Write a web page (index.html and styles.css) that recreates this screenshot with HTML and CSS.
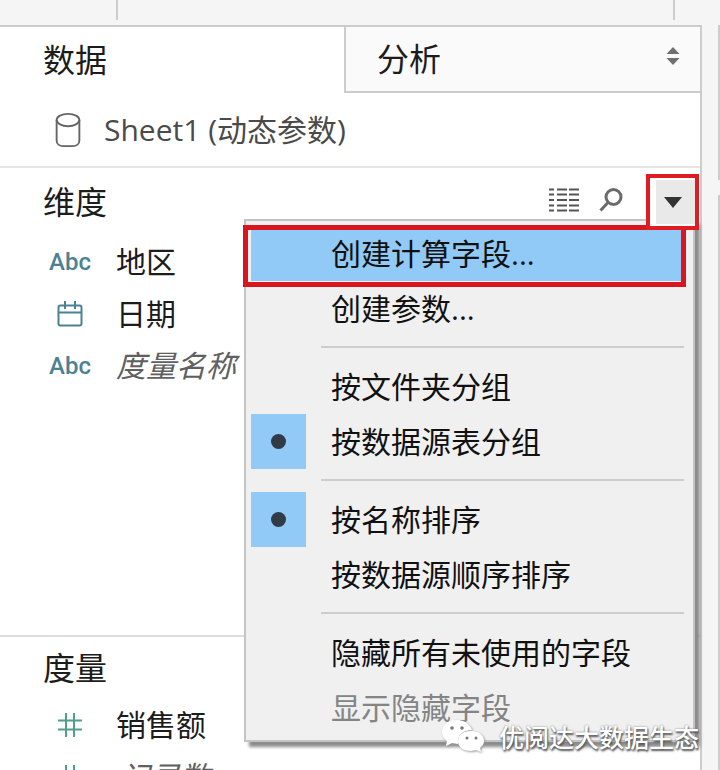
FILE: index.html
```html
<!DOCTYPE html>
<html lang="zh-CN">
<head>
<meta charset="utf-8">
<meta name="viewport" content="width=device-width, initial-scale=1">
<title>数据</title>
<link rel="stylesheet" href="styles.css">
</head>
<body>
<header class="toolbar"><span class="toolbar-cell"></span><span class="toolbar-cell toolbar-main"></span></header>
<div class="workspace">
  <main class="panel">
    <nav class="tabs">
      <button class="tab tab-active" type="button">数据</button>
      <button class="tab tab-analysis" type="button">分析
        <svg class="sorter" viewBox="0 0 14 20" aria-hidden="true"><path d="M7 1 13.5 8H.5zM7 19 .5 12h13z"/></svg>
      </button>
    </nav>
    <div class="source">
      <svg class="source-icon" viewBox="0 0 28 38" aria-hidden="true"><ellipse cx="14" cy="8.500" rx="12" ry="6.500"/><path d="M2 8.500V30c0 3.500 3 6 7 6h10c4 0 7-2.500 7-6V8.500"/></svg>
      <span>Sheet1 (动态参数)</span>
    </div>
    <section class="dimensions">
      <div class="section-head">
        <h2>维度</h2>
        <button class="tool" type="button" aria-label="查看数据">
          <svg class="grid-icon" viewBox="0 0 32 24" aria-hidden="true"><path d="M1 1.500h5M9 1.500h10M21 1.500h10M1 6.500h5M9 6.500h10M21 6.500h10M1 12h5M9 12h10M21 12h10M1 17.500h5M9 17.500h10M21 17.500h10M1 22.500h5M9 22.500h10M21 22.500h10"/></svg>
        </button>
        <button class="tool" type="button" aria-label="查找字段">
          <svg class="find-icon" viewBox="0 0 24 24" aria-hidden="true"><circle cx="14.500" cy="9" r="7.500"/><path d="M9 14.500 1.500 22.500"/></svg>
        </button>
        <button class="tool menu-toggle" type="button" aria-label="菜单">
          <svg class="caret" viewBox="0 0 18 11" aria-hidden="true"><path d="M0 0h18L9 11z"/></svg>
        </button>
      </div>
      <ul class="fields">
        <li><span class="type">Abc</span><span>地区</span></li>
        <li><span class="type"><svg class="date-icon" viewBox="0 0 26 26" aria-hidden="true"><rect x="1.500" y="4.500" width="23" height="20" rx="2"/><path d="M1.500 11.500h23M8 0v8M18 0v8"/></svg></span><span>日期</span></li>
        <li class="generated"><span class="type">Abc</span><span>度量名称</span></li>
      </ul>
      <div class="menu" role="menu">
        <button class="item current" role="menuitem" type="button"><span class="mark"></span>创建计算字段...</button>
        <button class="item" role="menuitem" type="button"><span class="mark"></span>创建参数...</button>
        <hr>
        <button class="item" role="menuitemradio" aria-checked="false" type="button"><span class="mark"></span>按文件夹分组</button>
        <button class="item" role="menuitemradio" aria-checked="true" type="button"><span class="mark"></span>按数据源表分组</button>
        <hr>
        <button class="item" role="menuitemradio" aria-checked="true" type="button"><span class="mark"></span>按名称排序</button>
        <button class="item" role="menuitemradio" aria-checked="false" type="button"><span class="mark"></span>按数据源顺序排序</button>
        <hr>
        <button class="item" role="menuitem" type="button"><span class="mark"></span>隐藏所有未使用的字段</button>
        <button class="item" role="menuitem" type="button" disabled><span class="mark"></span>显示隐藏字段</button>
      </div>
    </section>
    <section class="measures">
      <div class="section-head"><h2>度量</h2></div>
      <ul class="fields">
        <li><span class="type"><svg class="hash" viewBox="0 0 24 24" aria-hidden="true"><path d="M8 0v24M16 0v24M0 7.500h24M0 16.500h24"/></svg></span><span>销售额</span></li>
        <li class="generated"><span class="type"><svg class="hash" viewBox="0 0 24 24" aria-hidden="true"><path d="M8 0v24M16 0v24M0 7.500h24M0 16.500h24"/></svg></span><span>记录数</span></li>
      </ul>
    </section>
  </main>
  <aside class="shelves"><div class="shelf shelf-short"></div><div class="shelf"></div></aside>
</div>
<div class="watermark">
  <svg class="chat" viewBox="0 0 42 32" aria-hidden="true"><path d="M15 0C6 0 0 5 0 12c0 4 2 7 5 9l-1 5 6-3 6 1c-1-9 5-14 14-14C28 4 22 0 15 0z"/><path d="M29 11c-8 0-13 4-13 10s5 10 13 10l5-1 5 2-1-4c2-2 4-4 4-7 0-6-5-10-13-10z"/><g class="eyes"><circle cx="10" cy="8" r="1.800"/><circle cx="20" cy="8" r="1.800"/><circle cx="25" cy="18" r="1.500"/><circle cx="34" cy="18" r="1.500"/></g></svg>
  <span>优阅达大数据生态</span>
</div>
</body>
</html>
```
FILE: styles.css
```css
* { box-sizing: border-box; }
body {
  margin: 0;
  height: 100vh;
  display: flex;
  flex-direction: column;
  overflow: hidden;
  position: relative;
  background: #f5f5f5;
  color: #1c1c1c;
  font: 30px/52px "Open Sans", "Noto Sans CJK SC", sans-serif;
}
button {
  margin: 0;
  padding: 0;
  border: 0;
  background: none;
  color: inherit;
  font: inherit;
  text-align: left;
}
svg { display: block; fill: none; overflow: visible; }
h2 { margin: 0; font-size: 32px; font-weight: 400; line-height: 48px; }
ul { margin: 0; padding: 0; list-style: none; }

.toolbar { display: flex; height: 20px; flex: none; padding-right: 45px; }
.toolbar-cell { flex: 0 0 118px; border-right: 2px solid #ccc; }
.toolbar-main { flex: 1; }

.workspace { flex: 1; display: flex; min-height: 0; padding-top: 5px; }
.panel {
  flex: 1;
  min-width: 0;
  display: flex;
  flex-direction: column;
  background: #fff;
  border: 2px solid #ccc;
  border-left: 0;
  border-bottom: 0;
}
.tabs { display: grid; grid-template-columns: 344px 1fr; flex: none; height: 66px; }
.tab { font-size: 32px; line-height: 64px; padding-left: 43px; }
.tab-analysis {
  display: flex;
  align-items: center;
  justify-content: space-between;
  padding: 0 20px 0 31px;
  background: #fafafa;
  border: solid #ccc;
  border-width: 0 0 2px 2px;
}
.sorter { width: 14px; height: 20px; fill: #707070; margin-bottom: 6px; }
.source {
  display: flex;
  align-items: center;
  gap: 22px;
  flex: none;
  height: 75px;
  padding-left: 54px;
  border-bottom: 2px solid #e4e4e4;
  color: #4a4a4a;
}
.source-icon { width: 28px; height: 36px; stroke: #666; stroke-width: 2; }

.dimensions { flex: 1; min-height: 0; position: relative; }
.section-head { display: flex; align-items: center; padding: 6px 1px 6px 43px; height: 68px; }
.section-head h2 { flex: 1; }
.tool { display: grid; place-items: center; margin: 0 19px 4px 0; }
.grid-icon { width: 32px; height: 24px; stroke: #555; stroke-width: 2; }
.find-icon { width: 24px; height: 24px; stroke: #6a6a6a; stroke-width: 3; }
.menu-toggle {
  width: 53px;
  height: 56px;
  margin: 0 0 0 4px;
  background: #e9e9e9;
  border: 4px solid #e01b22;
  box-shadow: inset 4px 0 0 2px #fff;
  position: relative;
  z-index: 2;
}
.caret { width: 18px; height: 11px; fill: #333; }

.fields li { display: flex; align-items: center; height: 52px; }
.type {
  flex: 0 0 66px;
  margin: 0 13px 0 37px;
  font: 500 24px/52px Roboto, sans-serif;
  color: #4b8292;
  display: grid;
  place-items: center;
}
.type svg { stroke: #4b8292; stroke-width: 2; }
.date-icon { width: 26px; height: 26px; }
.type .hash { width: 24px; height: 24px; stroke: #4fa08a; stroke-width: 2; }
.generated { font-style: italic; color: #606060; }

.menu {
  position: absolute;
  top: 51px;
  right: 5px;
  width: 451px;
  padding: 5px;
  border: 2px solid #c4c4c4;
  background: #f0f0f1;
  box-shadow: 5px 5px 3px 0 #8c8c8c;
  color: #111;
  z-index: 1;
}
.item { display: flex; gap: 25px; width: 100%; height: 55px; line-height: 56px; }
.item:disabled { color: #848484; }
.mark { flex: 0 0 55px; height: 55px; display: grid; place-items: center; }
[aria-checked="true"] .mark { background: #91c9f7; }
[aria-checked="true"] .mark::before {
  content: "";
  width: 15px;
  height: 15px;
  border-radius: 50%;
  background: #303b45;
}
.current {
  position: relative;
  background: #91c9f7;
  width: calc(100% - 6px);
}
.current::after {
  content: "";
  position: absolute;
  inset: -1px -4px -6px -8px;
  border: 5px solid #d9151f;
}
.menu hr { margin: 10px 4px 11px 70px; border: 0; height: 2px; background: #cdcdce; }

.measures { flex: 0 0 135px; border-top: 2px solid #ddd; overflow: hidden; }
.measures .section-head { height: 62px; }
.measures .generated span:last-child { padding-left: 4px; }

.shelves { flex: 0 0 18px; padding-left: 16px; display: flex; flex-direction: column; gap: 15px; }
.shelf { flex: 1; background: #ccc; }
.shelf-short { flex: 0 0 155px; }

.watermark {
  position: absolute;
  right: 21px;
  bottom: 18px;
  z-index: 3;
  display: flex;
  align-items: center;
  gap: 15px;
  color: #fff;
  font: 500 25px/32px "Noto Sans CJK SC", sans-serif;
  text-shadow: 1px 2px 2px #555, 0 0 2px #777;
}
.chat { width: 42px; height: 32px; fill: #fff; filter: drop-shadow(1px 1px 1px #999); }
.eyes { fill: #777; }
```
